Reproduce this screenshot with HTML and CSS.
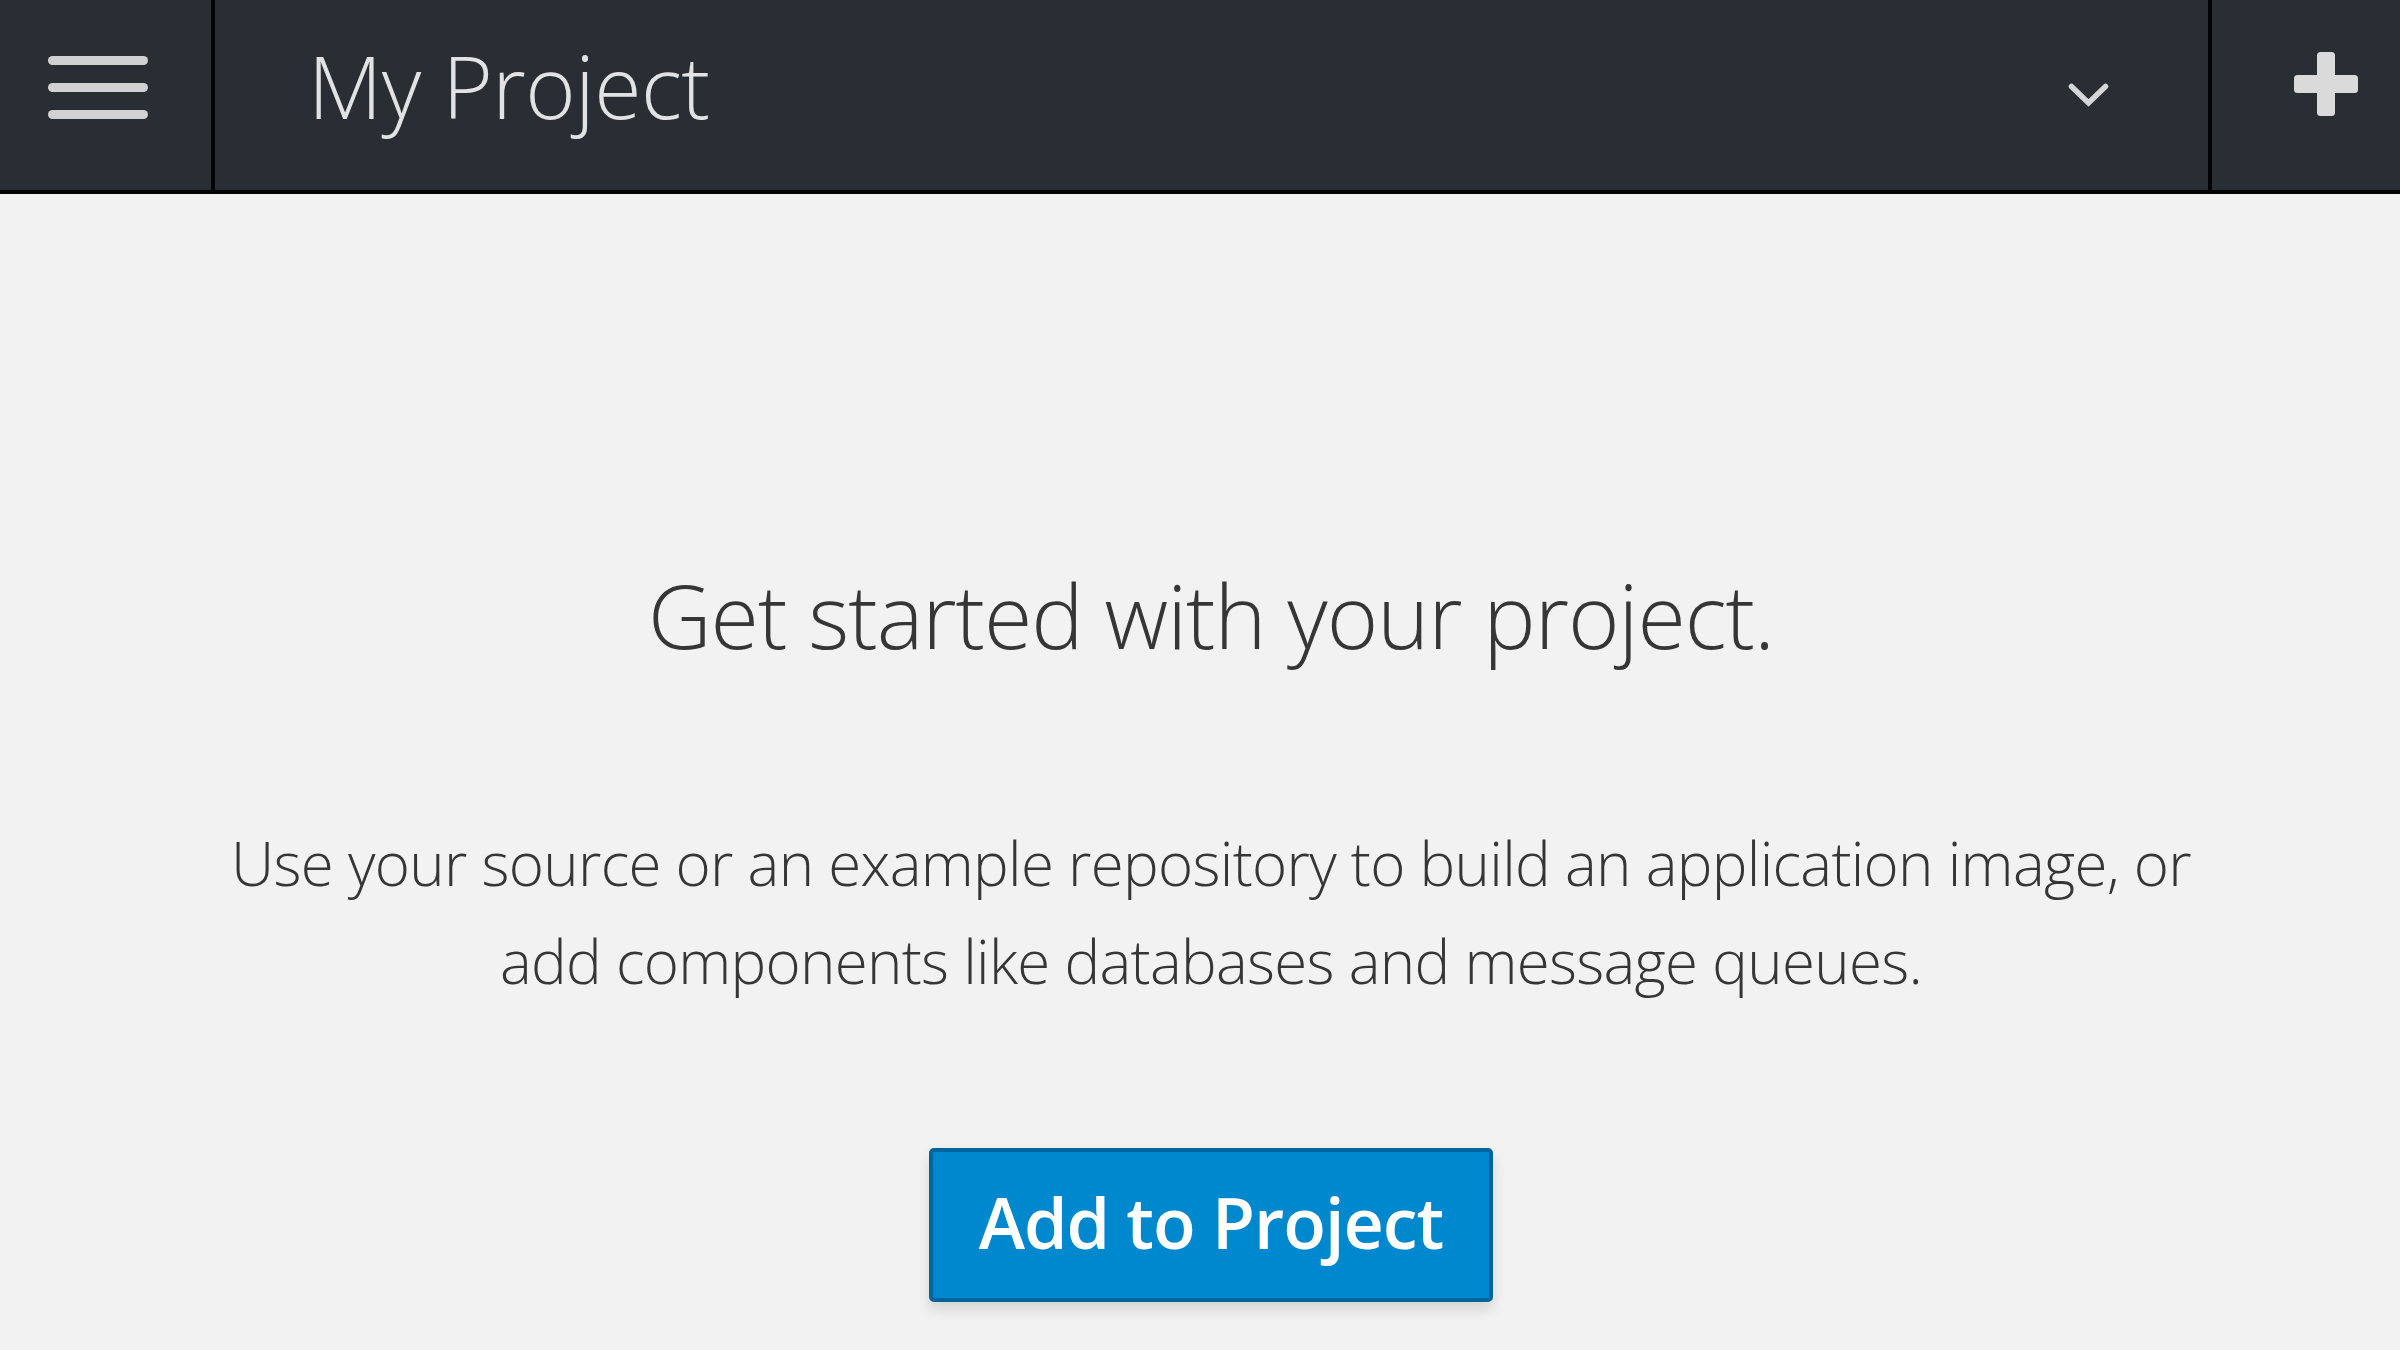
FILE: index.html
```html
<!DOCTYPE html>
<html lang="en">
<head>
<meta charset="utf-8">
<title>My Project</title>
<link rel="stylesheet" href="styles.css">
</head>
<body>
<header class="topbar">
  <div class="nav-toggle">
    <span class="bar"></span>
    <span class="bar"></span>
    <span class="bar"></span>
  </div>
  <div class="project-select">
    <span class="project-name">My Project</span>
    <svg class="chevron" width="41" height="24" viewBox="0 0 41 24" aria-hidden="true">
      <polyline points="3.5,3.5 20.5,20 37.5,3.5" fill="none" stroke="#d6d6d6" stroke-width="5.5" stroke-linecap="round" stroke-linejoin="miter"/>
    </svg>
  </div>
  <div class="add-cell">
    <svg class="plus" width="64" height="64" viewBox="0 0 64 64" aria-hidden="true">
      <rect x="23" y="0" width="18" height="64" rx="3.5" fill="#dadada"/>
      <rect x="0" y="23" width="64" height="18" rx="3.5" fill="#dadada"/>
    </svg>
  </div>
</header>
<main class="empty-state">
  <h1 class="empty-title">Get started with your project.</h1>
  <p class="empty-text">Use your source or an example repository to build an application image, or add components like databases and message queues.</p>
  <button class="btn-primary" type="button">Add to Project</button>
</main>
</body>
</html>
```
FILE: styles.css
```css
html, body {
  margin: 0;
  padding: 0;
}
body {
  background: #f2f2f2;
  font-family: "Open Sans", "Noto Sans", sans-serif;
  width: 2400px;
  height: 1350px;
  overflow: hidden;
}
.topbar {
  display: flex;
  height: 190px;
  background: #292e34;
  border-bottom: 4px solid #030303;
}
.nav-toggle {
  width: 163px;
  padding: 56px 0 0 48px;
  border-right: 4px solid #030303;
  display: flex;
  flex-direction: column;
  gap: 18px;
}
.bar {
  display: block;
  width: 100px;
  height: 9px;
  border-radius: 5px;
  background: #d1d1d1;
}
.project-select {
  flex: 1;
  display: flex;
  align-items: flex-start;
  padding-left: 93px;
  padding-right: 99px;
}
.project-name {
  margin-top: 43px;
  font-size: 86px;
  line-height: 86px;
  font-weight: 300;
  letter-spacing: -0.5px;
  color: #e2e2e2;
}
.chevron {
  margin-left: auto;
  margin-top: 83px;
}
.add-cell {
  width: 106px;
  padding-left: 82px;
  padding-top: 52px;
  border-left: 4px solid #030303;
}
.plus {
  display: block;
}
.empty-state {
  display: flex;
  flex-direction: column;
  align-items: center;
  padding-left: 22px;
  text-align: center;
  color: #363636;
}
.empty-title {
  margin: 377px 0 0;
  font-size: 88px;
  line-height: 88px;
  font-weight: 300;
  letter-spacing: -1px;
}
.empty-text {
  margin: 155px 0 0;
  max-width: 2000px;
  font-size: 60px;
  line-height: 98px;
  font-weight: 300;
  letter-spacing: -0.7px;
}
.btn-primary {
  margin-top: 138px;
  padding: 35px 46px 41px;
  font-family: "Open Sans", "Noto Sans", sans-serif;
  font-size: 70px;
  line-height: 70px;
  font-weight: 600;
  letter-spacing: -1px;
  color: #ffffff;
  background: #0088ce;
  border: 4px solid #00659c;
  border-radius: 5px;
  box-shadow: 0 8px 14px rgba(0, 0, 0, 0.12);
}
```
